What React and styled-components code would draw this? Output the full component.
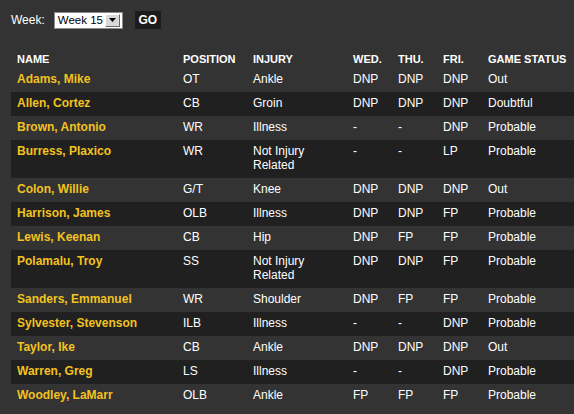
import React from 'react';
import styled, { createGlobalStyle } from 'styled-components';

const GlobalStyle = createGlobalStyle`
  html, body {
    margin: 0;
    padding: 0;
    background: #333333;
  }
  body {
    font-family: "Liberation Sans", Arial, sans-serif;
    color: #ffffff;
  }
`

const Page = styled.div`
  width: 574px;
  height: 414px;
  background: #333333;
  overflow: hidden;
  padding-top: 11px;
  box-sizing: border-box;
`

const Toolbar = styled.div`
  display: flex;
  align-items: center;
  height: 18px;
  margin-left: 11px;
  font-size: 12px;
`

const Label = styled.span`
  margin-right: 9px;
  line-height: 18px;
`

const FakeSelect = styled.div`
  display: flex;
  align-items: center;
  box-sizing: border-box;
  width: 69px;
  height: 17px;
  background: #ffffff;
  border: 1px solid #8a8a8a;
  color: #000000;
  font-size: 11.5px;
  padding-left: 3px;
  margin-right: 12px;
  span {
    flex: 1;
  }
`

const DropButton = styled.div`
  box-sizing: border-box;
  width: 15px;
  height: 13px;
  margin-right: 2px;
  background: #d9d9d9;
  border: 1px solid;
  border-color: #ffffff #6a6a6a #6a6a6a #ffffff;
  display: flex;
  align-items: center;
  justify-content: center;
`

const GoButton = styled.div`
  box-sizing: border-box;
  width: 26px;
  height: 18px;
  background: #1c1c1c;
  color: #ffffff;
  font-weight: bold;
  font-size: 12px;
  display: flex;
  align-items: center;
  justify-content: center;
`

const Table = styled.table`
  margin-top: 15px;
  margin-left: 11px;
  border-collapse: collapse;
  table-layout: fixed;
  width: 563px;
  font-size: 12px;
`

const Th = styled.th`
  box-sizing: border-box;
  text-align: left;
  font-size: 11px;
  font-weight: bold;
  line-height: 14px;
  padding: 8px 6px 2px;
  color: #ffffff;
  width: ${p => p.w}px;
  white-space: nowrap;
`

const Tr = styled.tr`
  background: ${p => (p.dark ? '#202020' : '#333333')};
`

const Td = styled.td`
  vertical-align: top;
  line-height: 14px;
  padding: 4px 6px 6px;
  color: ${p => (p.name ? '#f2c21f' : '#ffffff')};
  font-weight: ${p => (p.name ? 'bold' : 'normal')};
`

const columns = [
  ['NAME', 166],
  ['POSITION', 70],
  ['INJURY', 100],
  ['WED.', 45],
  ['THU.', 45],
  ['FRI.', 45],
  ['GAME STATUS', 92],
]

const players = [
  ['Adams, Mike', 'OT', 'Ankle', 'DNP', 'DNP', 'DNP', 'Out'],
  ['Allen, Cortez', 'CB', 'Groin', 'DNP', 'DNP', 'DNP', 'Doubtful'],
  ['Brown, Antonio', 'WR', 'Illness', '-', '-', 'DNP', 'Probable'],
  ['Burress, Plaxico', 'WR', 'Not Injury Related', '-', '-', 'LP', 'Probable'],
  ['Colon, Willie', 'G/T', 'Knee', 'DNP', 'DNP', 'DNP', 'Out'],
  ['Harrison, James', 'OLB', 'Illness', 'DNP', 'DNP', 'FP', 'Probable'],
  ['Lewis, Keenan', 'CB', 'Hip', 'DNP', 'FP', 'FP', 'Probable'],
  ['Polamalu, Troy', 'SS', 'Not Injury Related', 'DNP', 'DNP', 'FP', 'Probable'],
  ['Sanders, Emmanuel', 'WR', 'Shoulder', 'DNP', 'FP', 'FP', 'Probable'],
  ['Sylvester, Stevenson', 'ILB', 'Illness', '-', '-', 'DNP', 'Probable'],
  ['Taylor, Ike', 'CB', 'Ankle', 'DNP', 'DNP', 'DNP', 'Out'],
  ['Warren, Greg', 'LS', 'Illness', '-', '-', 'DNP', 'Probable'],
  ['Woodley, LaMarr', 'OLB', 'Ankle', 'FP', 'FP', 'FP', 'Probable'],
]

export default function App() {
  return (
    <Page>
      <GlobalStyle />
      <Toolbar>
        <Label>Week:</Label>
        <FakeSelect>
          <span>Week 15</span>
          <DropButton>
            <svg width="7" height="4" viewBox="0 0 7 4">
              <path d="M0 0 H7 L3.5 4 Z" fill="#000" />
            </svg>
          </DropButton>
        </FakeSelect>
        <GoButton>GO</GoButton>
      </Toolbar>
      <Table>
        <thead>
          <tr>
            {columns.map(([title, w]) => (
              <Th key={title} w={w}>{title}</Th>
            ))}
          </tr>
        </thead>
        <tbody>
          {players.map((row, i) => (
            <Tr key={row[0]} dark={i % 2 === 1}>
              {row.map((cell, j) => (
                <Td key={j} name={j === 0}>{cell}</Td>
              ))}
            </Tr>
          ))}
        </tbody>
      </Table>
    </Page>
  )
}
